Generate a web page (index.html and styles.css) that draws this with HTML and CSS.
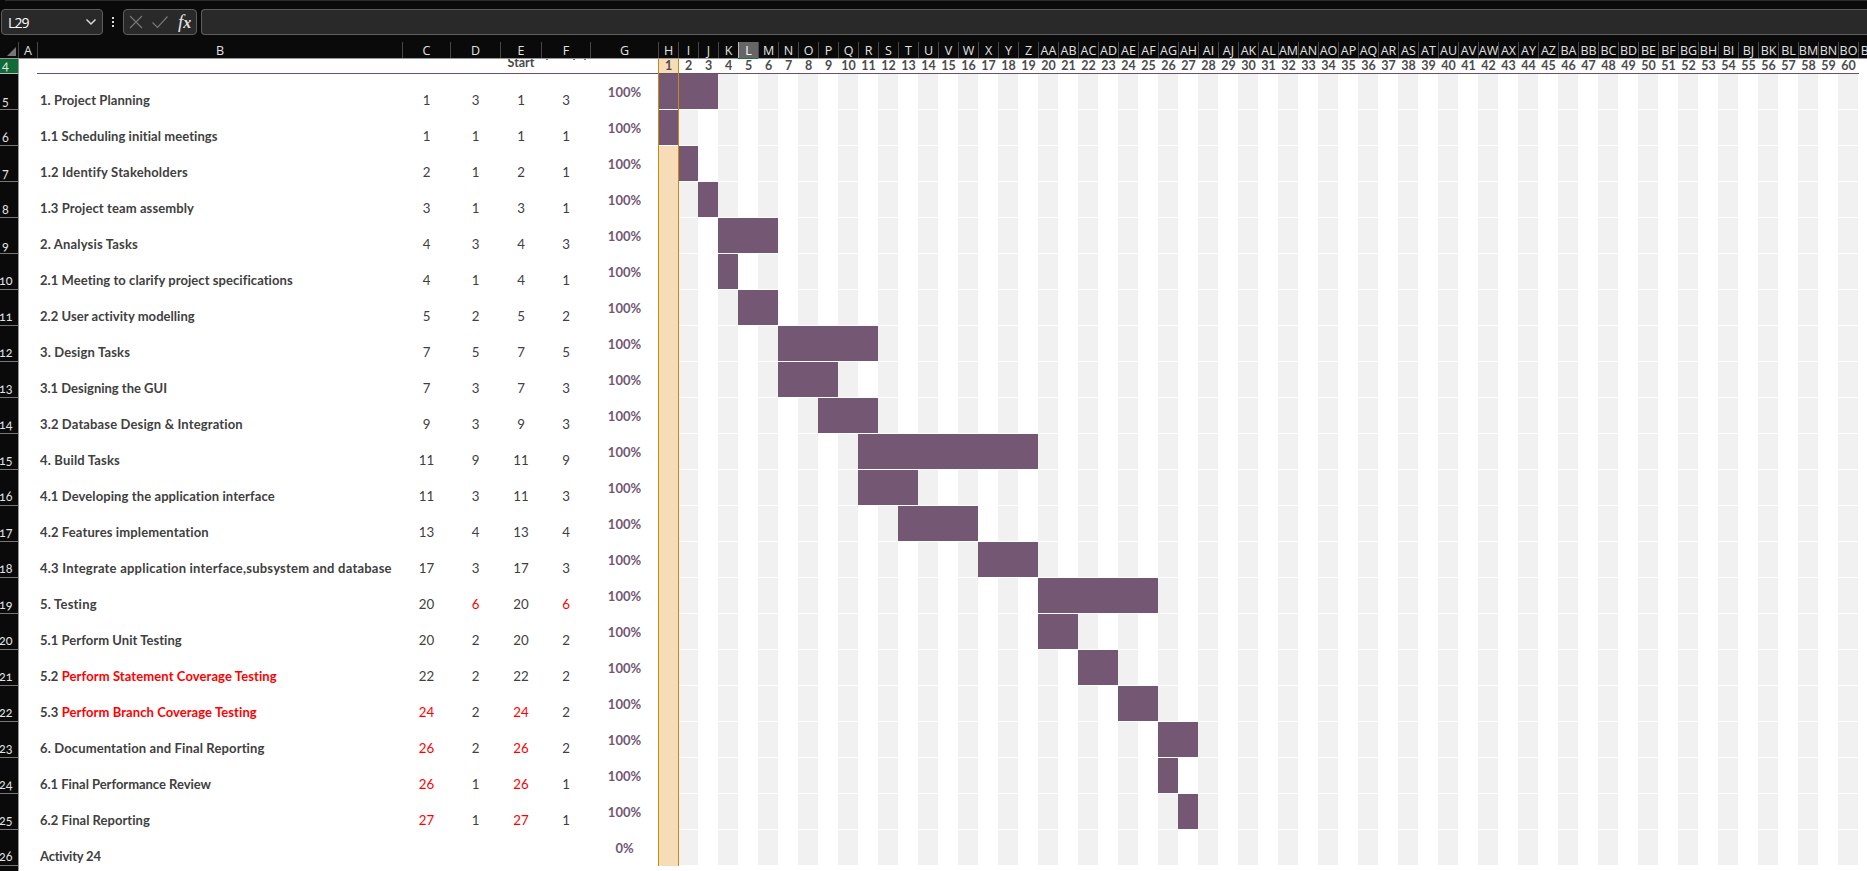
FILE: index.html
```html
<!DOCTYPE html>
<html lang="en">
<head>
<meta charset="utf-8">
<title>Project planner</title>
<link rel="stylesheet" href="styles.css">
</head>
<body>
<div class="app">
  <div class="ribbon-edge"></div>
  <div class="formula-bar">
    <div class="name-box"><span>L29</span>
      <svg width="12" height="8" viewBox="0 0 12 8"><path d="M1.500 1.500 6 6l4.500-4.500" fill="none" stroke="#d8d8d8" stroke-width="1.500"/></svg>
    </div>
    <div class="dots"><i></i><i></i><i></i></div>
    <div class="fx-box">
      <svg width="14" height="14" viewBox="0 0 14 14"><path d="M1 1l12 12M13 1L1 13" stroke="#777" stroke-width="1.200" fill="none"/></svg>
      <svg width="18" height="14" viewBox="0 0 18 14"><path d="M1.500 7.500l5 5L16.500 1.500" stroke="#777" stroke-width="1.200" fill="none"/></svg>
      <span class="fx"><span class="fx-f">f</span><span class="fx-x">x</span></span>
    </div>
    <div class="formula-input"></div>
  </div>
  <div class="sheet">
    <div class="col-heads" id="heads"></div>
    <div class="body" id="body"></div>
  </div>
</div>
<script src="script.js"></script>
</body>
</html>
```
FILE: styles.css
```css
* { box-sizing: border-box; }
body { margin: 0; background: #fff; font-family: "Open Sans", "Noto Sans", sans-serif; }
.app { width: 1867px; height: 871px; overflow: hidden; background: #0a0a0a; }
.ribbon-edge { height: 1px; margin-left: 5px; background: #2b2b2b; }
.formula-bar { display: flex; height: 41px; padding: 8px 0 7px 1px; }
.name-box { display: flex; justify-content: space-between; align-items: center; width: 102px; height: 26px; padding: 0 5px 0 6px; border: 1px solid #5e5e5e; border-radius: 4px; background: #292929; color: #fff; font-size: 14px; letter-spacing: -0.9px; }
.dots { display: flex; flex-direction: column; gap: 2px; width: 20px; padding: 8px 0 0 9px; }
.dots i { width: 2px; height: 2px; background: #d8d8d8; }
.fx-box { display: flex; align-items: center; width: 74px; height: 26px; padding-left: 5px; gap: 8px; border: 1px solid #5e5e5e; border-radius: 4px; background: #292929; }
.fx { margin-left: 1px; font: italic bold 17px/20px "Liberation Serif", serif; color: #e0e0e0; white-space: nowrap; }
.fx-f { font-size: 19px; font-weight: normal; }
.fx-x { font-size: 16px; }
.formula-input { flex: 1; height: 26px; margin-left: 4px; border: 1px solid #5e5e5e; border-right: 0; border-radius: 4px 0 0 4px; background: #292929; }

.sheet { width: 1900px; }
.col-heads { display: flex; height: 17px; border-bottom: 1px solid #999; background: #0a0a0a; color: #e2e2e2; font-size: 12.5px; line-height: 17px; }
.col-head { flex: none; border-left: 1px solid #474747; text-align: center; display: flex; justify-content: center; white-space: nowrap; }
.corner { flex: none; width: 18px; padding: 5px 0 0 7px; line-height: 0; }
.col-head.selected { background: #666; border-color: #bbb; box-shadow: 0 1px 0 #1d7044; color: #fff; }
.w-a { width: 19px; } .w-b { width: 365px; } .w-c { width: 48px; } .w-d { width: 50px; }
.w-e { width: 41px; } .w-f { width: 49px; } .w-g { width: 68px; } .w-p { width: 20px; }

.body { position: relative; background: #fff; height: 812px; }
.row { display: flex; height: 36px; color: #404040; font-family: Lato, "Open Sans", sans-serif; font-size: 13.3px; line-height: 18px; }
.row-head { flex: none; width: 19px; border-right: 1px solid #999; border-bottom: 1px solid #777; background: #0a0a0a; color: #e2e2e2; font-size: 12.5px; line-height: 14px; font-variant-numeric: oldstyle-nums; display: flex; align-items: flex-end; padding-left: 2px; }
.row-head.wide { padding-left: 0; padding-bottom: 1px; text-indent: -1px; }
.cell { flex: none; display: flex; justify-content: center; align-items: flex-end; padding: 0 0 1px 1px; white-space: nowrap; }
.task { justify-content: flex-start; padding-left: 3px; font-size: 13px; font-weight: bold; }
.pct { align-items: center; padding-bottom: 0; color: #735773; font-weight: bold; font-size: 13px; }
.red { color: #f00; }
.track { display: grid; grid-template-columns: repeat(60, 20px); width: 1201px; height: 36px; }
.track .stripes { grid-area: 1 / 2 / 2 / 61; width: 1181px; height: 35px; background: repeating-linear-gradient(90deg, #f1f1f1 0 20px, #fff 20px 40px); }
.track .bar { grid-row: 1; height: 36px; background: #735773; border-bottom: 1px solid #fff; }
.row.periods { height: 15px; font-size: 12.5px; font-weight: bold; color: #4c4c4c; line-height: 14px; }
.periods .row-head { background: #0f6b38; color: #e8e8e8; border-bottom-color: #bbb; font-weight: normal; }
.periods .underlined { display: flex; width: 1822px; border-bottom: 1px solid #6a4f6a; }
.periods .cell { align-items: flex-start; height: 14px; padding-bottom: 0; }
.periods .w-e { align-items: flex-end; overflow: hidden; padding-bottom: 3px; }
.row.next .row-head { border-bottom: 0; }
.peach { position: absolute; left: 658px; top: 0; width: 21px; height: 807px; background: #f6dcb7; }
.peach-edge { position: absolute; left: 658px; top: 0; width: 21px; height: 807px; border: solid #cd8715; border-width: 0 1px; }
.layer { position: relative; }
.gap-a { flex: none; width: 18px; }
```
FILE: script.js
```js
// name, start, duration, which figures are red; widths are the label's drawn length
const tasks = [
  ["1. Project Planning", 1, 3, "", 110], ["1.1 Scheduling initial meetings", 1, 1, "", 178],
  ["1.2 Identify Stakeholders", 2, 1, "", 148], ["1.3 Project team assembly", 3, 1, "", 154],
  ["2. Analysis Tasks", 4, 3, "", 98], ["2.1 Meeting to clarify project specifications", 4, 1, "", 253],
  ["2.2 User activity modelling", 5, 2, "", 155], ["3. Design Tasks", 7, 5, "", 90],
  ["3.1 Designing the GUI", 7, 3, "", 127], ["3.2 Database Design & Integration", 9, 3, "", 203],
  ["4. Build Tasks", 11, 9, "", 80], ["4.1 Developing the application interface", 11, 3, "", 235],
  ["4.2 Features implementation", 13, 4, "", 169],
  ["4.3 Integrate application interface,subsystem and database", 17, 3, "", 352],
  ["5. Testing", 20, 6, "d", 57], ["5.1 Perform Unit Testing", 20, 2, "", 142],
  ["5.2 |Perform Statement Coverage Testing", 22, 2, "", 237],
  ["5.3 |Perform Branch Coverage Testing", 24, 2, "s", 217],
  ["6. Documentation and Final Reporting", 26, 2, "s", 225],
  ["6.1 Final Performance Review", 26, 1, "s", 171], ["6.2 Final Reporting", 27, 1, "s", 110],
  ["Activity 24", "", "", "", 61]
];
const colName = n => n < 26 ? String.fromCharCode(65 + n)
  : String.fromCharCode(64 + Math.floor(n / 26)) + String.fromCharCode(65 + n % 26);

let heads = '<div class="corner"><svg width="9" height="9"><path d="M9 0v9H0z" fill="#777"/></svg></div>';
for (let n = 0; n < 68; n++) {
  const w = n < 7 ? "abcdefg"[n] : "p";
  heads += `<div class="col-head w-${w}${n === 11 ? " selected" : ""}">${colName(n)}</div>`;
}
document.getElementById("heads").innerHTML = heads;

let html = '<div class="peach"></div><div class="layer">';
html += '<div class="row periods"><div class="row-head">4</div><div class="gap-a"></div><div class="underlined">' +
  '<div class="cell w-b"></div><div class="cell w-c"></div><div class="cell w-d"></div>' +
  '<div class="cell w-e"><span>Start</span></div>' +
  '<div class="cell w-f"><svg width="48" height="2"><path d="M4 .5h2M31 .5h2M42 .5h2" stroke="#777"/></svg></div><div class="cell w-g"></div>';
for (let p = 1; p <= 60; p++) html += `<div class="cell w-p">${p}</div>`;
html += "</div></div>";
tasks.forEach(([name, start, dur, red, width], i) => {
  const s = red === "s" ? " red" : "", d = red === "d" ? " red" : "";
  const [a, b] = name.split("|");
  const label = b ? `${a}<span class="red">${b}</span>` : a.replace("&", "&amp;");
  html += `<div class="row"><div class="row-head${i > 4 ? " wide" : ""}">${i + 5}</div><div class="gap-a"></div>` +
    `<div class="cell task w-b"><span class="label" data-width="${width}">${label}</span></div>` +
    `<div class="cell w-c${s}">${start}</div><div class="cell w-d${d}">${dur}</div>` +
    `<div class="cell w-e${s}">${start}</div><div class="cell w-f${d}">${dur}</div>` +
    `<div class="cell pct w-g">${dur ? "100%" : "0%"}</div><div class="track"><div class="stripes"></div>` +
    (dur ? `<div class="bar" style="grid-column:${start} / span ${dur}"></div>` : "") + "</div></div>";
});
html += '<div class="row next"><div class="row-head"></div></div></div><div class="peach-edge"></div>';
document.getElementById("body").innerHTML = html;

document.querySelectorAll(".label").forEach(el => {
  const diff = Number(el.dataset.width) - el.getBoundingClientRect().width;
  el.style.letterSpacing = diff / el.textContent.length + "px";
});
```
